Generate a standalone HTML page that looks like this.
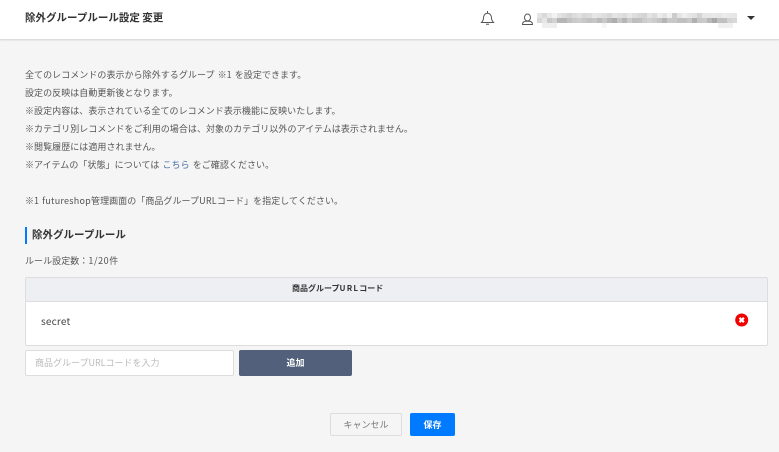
<!DOCTYPE html>
<html lang="ja"><head><meta charset="utf-8"><title>除外グループルール設定 変更</title>
<style>
*{box-sizing:border-box}
html,body{margin:0;padding:0}
body{width:779px;height:452px;overflow:hidden;position:relative;background:#f5f5f5;font-family:"Noto Sans CJK JP","Liberation Sans",sans-serif;color:#555}
.a{position:absolute;white-space:nowrap}
.hd{left:0;top:0;width:779px;height:40px;background:#fff;border-bottom:1px solid #ddd;box-shadow:0 1px 1px rgba(0,0,0,.06)}
.l{left:25px;font-size:9px;line-height:18px;color:#555;letter-spacing:.05px;word-spacing:1px}
.l a{color:#4a6fa5;text-decoration:none}
.l b{font-weight:400;letter-spacing:.25px}
.m{position:absolute;height:5px;display:flex}
.m i{display:block;width:5px;height:5px;flex:none}
</style></head><body>
<div class="a hd"></div>
<div class="a" style="left:25px;top:10px;font-size:10.5px;line-height:16px;font-weight:700;color:#333">除外グループルール設定 変更</div>
<svg class="a" style="left:480px;top:10px" width="15" height="16" viewBox="0 0 15 16" fill="none" stroke="#555" stroke-width="1"><path d="M1.500 12.500c1.200-1.300 2-2.200 2-4.500 0-2.700 1.500-4.700 4-4.700s4 2 4 4.700c0 2.300.8 3.200 2 4.500z"/><path d="M7.500 1v2.300M6 14.300h3"/></svg>
<svg class="a" style="left:521px;top:13px" width="13" height="13" viewBox="0 0 13 13" fill="none" stroke="#555" stroke-width="1"><ellipse cx="6.500" cy="4.500" rx="3" ry="3.500"/><path d="M1.500 11.500c0-2 1.500-3 3-3.200h4c1.500.2 3 1.200 3 3.200z"/></svg>
<div class="m" style="left:537px;top:13px"><i style="background:#e4e4e4"></i><i style="background:#dadada"></i><i style="background:#e8e8e8"></i><i style="background:#f2f2f2"></i><i style="background:#e4e4e4"></i><i style="background:#dcdcdc"></i><i style="background:#d4d4d4"></i><i style="background:#dcdcdc"></i><i style="background:#e2e2e2"></i><i style="background:#d8d8d8"></i><i style="background:#dcdcdc"></i><i style="background:#e6e6e6"></i><i style="background:#e2e2e2"></i><i style="background:#dedede"></i><i style="background:#d8d8d8"></i><i style="background:#e4e4e4"></i><i style="background:#e0e0e0"></i><i style="background:#dcdcdc"></i><i style="background:#e6e6e6"></i><i style="background:#dedede"></i><i style="background:#d8d8d8"></i><i style="background:#d4d4d4"></i><i style="background:#e4e4e4"></i><i style="background:#dcdcdc"></i><i style="background:#ececec"></i><i style="background:#e2e2e2"></i><i style="background:#f0f0f0"></i><i style="background:#cccccc"></i><i style="background:#e4e4e4"></i><i style="background:#eeeeee"></i><i style="background:#e6e6e6"></i><i style="background:#e2e2e2"></i><i style="background:#d4d4d4"></i><i style="background:#e6e6e6"></i><i style="background:#e6e6e6"></i><i style="background:#e8e8e8"></i><i style="background:#e6e6e6"></i><i style="background:#ececec"></i><i style="background:#e8e8e8"></i><i style="background:#e6e6e6"></i></div>
<div class="m" style="left:537px;top:18px"><i style="background:#d8d8d8"></i><i style="background:#e6e6e6"></i><i style="background:#c8c8c8"></i><i style="background:#d2d2d2"></i><i style="background:#b6b6b6"></i><i style="background:#b6b6b6"></i><i style="background:#c2c2c2"></i><i style="background:#cacaca"></i><i style="background:#cecece"></i><i style="background:#c8c8c8"></i><i style="background:#c2c2c2"></i><i style="background:#c6c6c6"></i><i style="background:#bbbbbb"></i><i style="background:#c8c8c8"></i><i style="background:#b8b8b8"></i><i style="background:#aeaeae"></i><i style="background:#c6c6c6"></i><i style="background:#b6b6b6"></i><i style="background:#cccccc"></i><i style="background:#bebebe"></i><i style="background:#c0c0c0"></i><i style="background:#cccccc"></i><i style="background:#d2d2d2"></i><i style="background:#cccccc"></i><i style="background:#c4c4c4"></i><i style="background:#b4b4b4"></i><i style="background:#c8c8c8"></i><i style="background:#c8c8c8"></i><i style="background:#c0c0c0"></i><i style="background:#c0c0c0"></i><i style="background:#c8c8c8"></i><i style="background:#b0b0b0"></i><i style="background:#c8c8c8"></i><i style="background:#cacaca"></i><i style="background:#b8b8b8"></i><i style="background:#a8a8a8"></i><i style="background:#c0c0c0"></i><i style="background:#c0c0c0"></i><i style="background:#d4d4d4"></i><i style="background:#d8d8d8"></i></div>
<div class="m" style="left:542px;top:23px"><i style="background:#eee;width:15px"></i></div>
<div class="m" style="left:602px;top:23px"><i style="background:#f6f6f6"></i></div>
<div class="m" style="left:718px;top:23px"><i style="background:#f0f0f0;width:15px"></i></div>
<div class="a" style="left:747px;top:16px;width:0;height:0;border-left:4px solid transparent;border-right:4px solid transparent;border-top:4px solid #333"></div>

<div class="a l" style="top:66px">全てのレコメンドの表示から除外するグループ ※1 を設定できます。</div>
<div class="a l" style="top:84px">設定の反映は自動更新後となります。</div>
<div class="a l" style="top:102px">※設定内容は、表示されている全てのレコメンド表示機能に反映いたします。</div>
<div class="a l" style="top:120px">※カテゴリ別レコメンドをご利用の場合は、対象のカテゴリ以外のアイテムは表示されません。</div>
<div class="a l" style="top:138px">※閲覧履歴には適用されません。</div>
<div class="a l" style="top:156px">※アイテムの「状態」については <a>こちら</a> をご確認ください。</div>
<div class="a l" style="top:192px">※1 <b>futureshop</b>管理画面の「商品グループ<b>URL</b>コード」を指定してください。</div>

<div class="a" style="left:25px;top:227px;width:2px;height:17px;background:#007bff"></div>
<div class="a" style="left:32px;top:226px;font-size:10.5px;line-height:17px;font-weight:700;color:#333">除外グループルール</div>
<div class="a l" style="top:252px">ルール設定数：<b style="letter-spacing:.6px">1/20</b>件</div>

<div class="a" style="left:25px;top:277px;width:743px;height:69px;background:#fff;border:1px solid #ddd;border-radius:2px"></div>
<div class="a" style="left:26px;top:278px;width:741px;height:24px;background:#eeeff3;border-bottom:1px solid #ddd"></div>
<div class="a" style="left:292px;top:279px;font-size:8px;line-height:20px;font-weight:700;color:#333">商品グループ<span style="letter-spacing:1.2px">URL</span>コード</div>
<div class="a" style="left:41px;top:313px;font-size:10px;line-height:16px;letter-spacing:.2px;color:#444">secret</div>
<svg class="a" style="left:735px;top:313px" width="14" height="14" viewBox="0 0 14 14"><circle cx="6.700" cy="7" r="6.500" fill="#f50000"/><path d="M4.500 4.800l4.400 4.400M8.900 4.800l-4.400 4.400" stroke="#fff" stroke-width="2.200"/></svg>

<div class="a" style="left:25px;top:350px;width:209px;height:26px;background:#fff;border:1px solid #ddd;border-radius:2px;padding-left:9px;font-size:9px;line-height:24px;color:#bbb">商品グループURLコードを入力</div>
<div class="a" style="left:239px;top:350px;width:113px;height:26px;background:#52607c;border-radius:2px;color:#fff;font-size:9px;font-weight:700;line-height:26px;text-align:center">追加</div>
<div class="a" style="left:330px;top:413px;width:72px;height:23px;background:#f5f5f5;border:1px solid #ddd;border-radius:2px;color:#777;font-size:9px;line-height:21px;text-align:center">キャンセル</div>
<div class="a" style="left:410px;top:413px;width:45px;height:23px;background:#007bff;border-radius:2px;color:#fff;font-size:9px;font-weight:700;line-height:23px;text-align:center">保存</div>
</body></html>
